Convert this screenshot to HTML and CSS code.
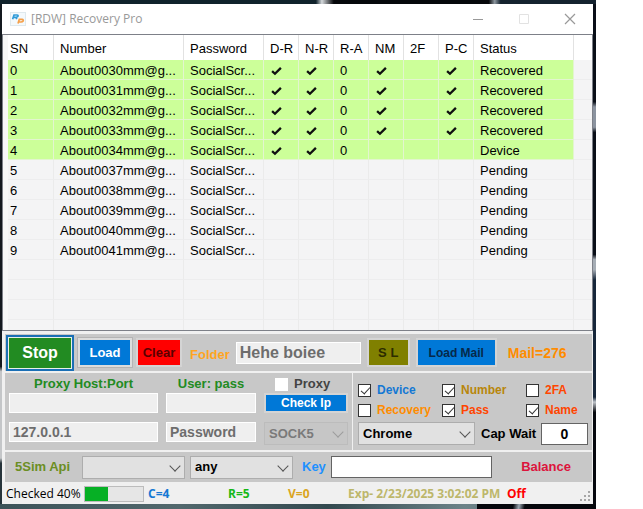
FILE: index.html
```html
<!DOCTYPE html>
<html lang="en">
<head>
<meta charset="utf-8">
<title>[RDW] Recovery Pro</title>
<link rel="stylesheet" href="styles.css">
</head>
<body>
<svg class="defs" aria-hidden="true">
  <symbol id="tick" viewBox="0 0 10 9"><path d="M1 4.6 L3.6 7 L9 1.6" fill="none" stroke="#111" stroke-width="2.1"/></symbol>
</svg>
<div class="desktop">
<main class="window">
  <header class="titlebar">
    <svg class="logo" viewBox="0 0 16 14">
      <rect x=".5" y=".5" width="15" height="13" fill="#f4f9fc" stroke="#dfe9ee"/>
      <path d="M2.6 7.2 L4 3 H7 Q8.6 3.2 7.8 4.6 Q7.2 5.4 6 5.4 L6.8 7.2 M3.4 5.4 H6" fill="none" stroke="#2f9bd8" stroke-width="1.7"/>
      <path d="M8 11.6 L9.3 7.4 H12 Q13.8 7.6 13.1 9 Q12.5 10 11 10 H8.8" fill="none" stroke="#f5a04a" stroke-width="1.7"/>
    </svg>
    <h1>[RDW] Recovery Pro</h1>
    <div class="controls">
      <button aria-label="Minimize"><svg viewBox="0 0 12 12"><path d="M1 6.5H11" stroke="#999"/></svg></button>
      <button aria-label="Maximize"><svg viewBox="0 0 12 12"><path d="M1.5 1.5H10.5V10.5H1.5Z" fill="none" stroke="#e2e2e2"/></svg></button>
      <button aria-label="Close"><svg viewBox="0 0 12 12"><path d="M1 1L11 11M11 1L1 11" stroke="#999" stroke-width="1.2"/></svg></button>
    </div>
  </header>

  <section class="list">
    <table>
      <colgroup><col class="c-sn"><col class="c-num"><col class="c-pw"><col class="c-a"><col class="c-a"><col class="c-a"><col class="c-a"><col class="c-a"><col class="c-a"><col class="c-status"><col></colgroup>
      <thead><tr><th>SN</th><th>Number</th><th>Password</th><th>D-R</th><th>N-R</th><th>R-A</th><th>NM</th><th>2F</th><th>P-C</th><th>Status</th><th></th></tr></thead>
      <tbody>
        <tr class="ok"><td>0</td><td>About0030mm@g...</td><td>SocialScr...</td><td><svg><use href="#tick"/></svg></td><td><svg><use href="#tick"/></svg></td><td>0</td><td><svg><use href="#tick"/></svg></td><td></td><td><svg><use href="#tick"/></svg></td><td>Recovered</td><td></td></tr>
        <tr class="ok"><td>1</td><td>About0031mm@g...</td><td>SocialScr...</td><td><svg><use href="#tick"/></svg></td><td><svg><use href="#tick"/></svg></td><td>0</td><td><svg><use href="#tick"/></svg></td><td></td><td><svg><use href="#tick"/></svg></td><td>Recovered</td><td></td></tr>
        <tr class="ok"><td>2</td><td>About0032mm@g...</td><td>SocialScr...</td><td><svg><use href="#tick"/></svg></td><td><svg><use href="#tick"/></svg></td><td>0</td><td><svg><use href="#tick"/></svg></td><td></td><td><svg><use href="#tick"/></svg></td><td>Recovered</td><td></td></tr>
        <tr class="ok"><td>3</td><td>About0033mm@g...</td><td>SocialScr...</td><td><svg><use href="#tick"/></svg></td><td><svg><use href="#tick"/></svg></td><td>0</td><td><svg><use href="#tick"/></svg></td><td></td><td><svg><use href="#tick"/></svg></td><td>Recovered</td><td></td></tr>
        <tr class="ok"><td>4</td><td>About0034mm@g...</td><td>SocialScr...</td><td><svg><use href="#tick"/></svg></td><td><svg><use href="#tick"/></svg></td><td>0</td><td></td><td></td><td></td><td>Device</td><td></td></tr>
        <tr><td>5</td><td>About0037mm@g...</td><td>SocialScr...</td><td></td><td></td><td></td><td></td><td></td><td></td><td>Pending</td><td></td></tr>
        <tr><td>6</td><td>About0038mm@g...</td><td>SocialScr...</td><td></td><td></td><td></td><td></td><td></td><td></td><td>Pending</td><td></td></tr>
        <tr><td>7</td><td>About0039mm@g...</td><td>SocialScr...</td><td></td><td></td><td></td><td></td><td></td><td></td><td>Pending</td><td></td></tr>
        <tr><td>8</td><td>About0040mm@g...</td><td>SocialScr...</td><td></td><td></td><td></td><td></td><td></td><td></td><td>Pending</td><td></td></tr>
        <tr><td>9</td><td>About0041mm@g...</td><td>SocialScr...</td><td></td><td></td><td></td><td></td><td></td><td></td><td>Pending</td><td></td></tr>
        <tr><td></td><td></td><td></td><td></td><td></td><td></td><td></td><td></td><td></td><td></td><td></td></tr>
        <tr><td></td><td></td><td></td><td></td><td></td><td></td><td></td><td></td><td></td><td></td><td></td></tr>
        <tr><td></td><td></td><td></td><td></td><td></td><td></td><td></td><td></td><td></td><td></td><td></td></tr>
        <tr class="last"><td></td><td></td><td></td><td></td><td></td><td></td><td></td><td></td><td></td><td></td><td></td></tr>
      </tbody>
    </table>
  </section>

  <div class="panels">
    <section class="panel actions">
      <button class="btn stop">Stop</button>
      <button class="btn load">Load</button>
      <button class="btn clear">Clear</button>
      <label class="orange" for="folder">Folder</label>
      <input class="field soft folder" id="folder" value="Hehe boiee">
      <button class="btn sl">S L</button>
      <button class="btn mail">Load Mail</button>
      <span class="count">Mail=276</span>
    </section>

    <div class="settings">
      <section class="panel proxy">
        <label class="green" for="host">Proxy Host:Port</label>
        <label class="green" for="user">User: pass</label>
        <label class="check dim"><input type="checkbox">Proxy</label>
        <input class="field soft" id="host">
        <input class="field soft" id="user">
        <button class="btn checkip">Check Ip</button>
        <input class="field soft" aria-label="Host" value="127.0.0.1">
        <input class="field soft" aria-label="Password" value="Password">
        <div class="drop off"><select aria-label="Proxy type" disabled><option>SOCK5</option></select></div>
      </section>
      <section class="panel options">
        <div class="checks">
          <label class="check blue"><input type="checkbox" checked>Device</label>
          <label class="check gold"><input type="checkbox" checked>Number</label>
          <label class="check red"><input type="checkbox">2FA</label>
          <label class="check amber"><input type="checkbox">Recovery</label>
          <label class="check red"><input type="checkbox" checked>Pass</label>
          <label class="check red"><input type="checkbox" checked>Name</label>
        </div>
        <div class="browser">
          <div class="drop"><select aria-label="Browser"><option>Chrome</option></select></div>
          <label for="wait">Cap Wait</label>
          <input class="field hard wait" id="wait" value="0">
        </div>
      </section>
    </div>

    <section class="panel api">
      <label class="olive" for="country">5Sim Api</label>
      <div class="drop"><select id="country"><option></option></select></div>
      <div class="drop"><select aria-label="Operator"><option>any</option></select></div>
      <label class="sky" for="key">Key</label>
      <input class="field hard key" id="key">
      <span class="balance">Balance</span>
    </section>
  </div>

  <footer class="status">
    <span class="done">Checked 40%</span>
    <div class="bar"><div class="fill" style="width:40%"></div></div>
    <b class="s-c">C=4</b>
    <b class="s-r">R=5</b>
    <b class="s-v">V=0</b>
    <b class="s-e">Exp- 2/23/2025 3:02:02 PM</b>
    <b class="s-o">Off</b>
    <svg class="grip" viewBox="0 0 12 12"><path d="M8 0h2v2h-2zM4 4h2v2h-2zM8 4h2v2h-2zM0 8h2v2h-2zM4 8h2v2h-2zM8 8h2v2h-2z" fill="#a6a6a6"/></svg>
  </footer>
</main>
</div>
</body>
</html>
```
FILE: styles.css
```css
* { box-sizing: border-box; }

body {
  margin: 0;
  padding-right: 47px;
  background: #fff;
  font: 13px/16px "Liberation Sans", sans-serif;
  color: #000;
}

.defs { position: absolute; width: 0; height: 0; }

.desktop {
  padding: 4px 3px 5px 2px;
  background:
    linear-gradient(100deg, transparent 80%, #05070c 80%, #05070c 86%, #9aa6b0 87%, #05070c 88%) bottom / 100% 5px no-repeat,
    linear-gradient(90deg, #3c5359, #52686d 30%, #33494f 55%, #6d8388 78%, #4c6066) bottom / 100% 5px no-repeat,
    linear-gradient(90deg, #10222b 0 53%, #d5d9dc 54%, #05070a 56% 82%, #8d979f 83%, #14222e 84%) top / 100% 4px no-repeat,
    linear-gradient(#0a0f18 0 20%, #8b939f 21% 25%, #0a0f18 26% 50%, #a6adb5 51% 53%, #16263a 55% 78%, #c0c5cb 79%, #06080e 81%) right / 3px 100% no-repeat,
    linear-gradient(#14191f 0 72%, #c4c6c8 73% 90%, #26343b 91%);
}

.window { background: #f0f0f0; }

/* Title bar */
.titlebar {
  display: flex;
  align-items: center;
  height: 30px;
  padding-left: 8px;
  background: #fff;
}
.logo { width: 16px; height: 14px; }
h1 {
  flex: 1;
  margin: 0 0 0 5px;
  font: 12px/16px "Open Sans", sans-serif;
  color: #999;
}
.controls { display: flex; }
.controls button {
  width: 46px;
  height: 28px;
  padding: 0;
  border: 0;
  background: none;
}
.controls svg { display: block; width: 12px; height: 12px; margin: 0 auto; }

/* Account list */
.list {
  padding-left: 5px;
  border: 1px solid #7d8088;
  background: #f8f8f8;
}
table {
  width: 100%;
  table-layout: fixed;
  border-collapse: separate;
  border-spacing: 0;
}
.c-sn { width: 46px; }
.c-num { width: 130px; }
.c-pw { width: 80px; }
.c-a { width: 35px; }
.c-status { width: 100px; }
th, td {
  padding: 0 0 0 6px;
  border-right: 1px solid #ebebeb;
  text-align: left;
  font-weight: 400;
  white-space: nowrap;
}
th:first-child, td:first-child { padding-left: 2px; }
th:last-child, td:last-child { border-right: 0; }
th { height: 25px; padding-top: 2px; background: #fff; border-color: #e2e2e2; }
td { height: 20px; padding-top: 2px; background: #f4f4f5; border-bottom: 1px solid #ededee; }
.ok td { background: #ccff99; border-color: #e3f5cf; }
.ok td:last-child { background: #f4f4f5; border-color: #ededee; }
.last td { height: 10px; border-bottom: 0; }
td svg { display: block; width: 11px; height: 10px; margin-left: 1px; }

/* Panels */
.panels {
  display: flex;
  flex-direction: column;
  gap: 2px;
  padding: 3px 1px 1px 3px;
  font-weight: 700;
}
.panel { background: #c8c8c8; }

.btn {
  padding: 0;
  border: 2px solid #d4d4d4;
  font: 700 13px/16px "Liberation Sans", sans-serif;
}
.field {
  min-width: 0;
  padding: 0 3px;
  font: 700 14px/16px "Liberation Sans", sans-serif;
  border-radius: 0;
}
.soft { height: 22px; border: 1px solid #fff; background: #efefef; color: #6d6d6d; }
.hard { height: 22px; border: 1px solid #646464; background: #fff; color: #000; }

.drop { position: relative; height: 23px; }
.drop select {
  width: 100%;
  height: 100%;
  padding: 0 4px;
  border: 1px solid #adadad;
  border-radius: 0;
  background: #e1e1e1;
  color: #000;
  font: 700 13px/16px "Liberation Sans", sans-serif;
  appearance: none;
}
.drop::after {
  content: "";
  position: absolute;
  right: 6px;
  top: 6px;
  width: 7px;
  height: 7px;
  border: solid #555;
  border-width: 0 1px 1px 0;
  transform: rotate(45deg);
  pointer-events: none;
}
.off select { background: #c6c6c6; border-color: #bcbcbc; color: #7a7a7a; opacity: 1; }
.off::after { border-color: #9c9c9c; }

.check { display: flex; align-items: center; gap: 6px; font-size: 12px; }
.check input {
  position: relative;
  width: 13px;
  height: 13px;
  margin: 0;
  border: 1px solid #333;
  background: #fff;
  appearance: none;
}
.check input:checked::after {
  content: "";
  position: absolute;
  left: 4px;
  top: 0;
  width: 4px;
  height: 8px;
  border: solid #333;
  border-width: 0 1px 1px 0;
  transform: rotate(42deg);
}

.orange { color: #ffa51e; }
.green { color: #228b22; }
.blue { color: #1478d4; }
.gold { color: #b8860b; }
.red { color: #ff4500; }
.amber { color: #ff8c00; }
.olive { color: #6b8e23; }
.sky { color: #1e90ff; }

.actions { display: flex; align-items: center; height: 37px; padding-left: 1px; }
.stop {
  width: 68px;
  height: 36px;
  border-color: #1a6fb5;
  outline: 1px solid #e8f0e8;
  outline-offset: -3px;
  background: #228b22;
  color: #fff;
  font-size: 16px;
}
.load { width: 54px; height: 29px; margin-left: 4px; border-color: #dcdcdc; outline: 1px solid #b4b4b4; background: #0078d7; color: #fff; }
.clear { width: 46px; height: 29px; margin-left: 4px; background: #f00; color: #5a0000; }
.actions .orange { margin: 4px 6px 0 8px; }
.folder { width: 125px; font-size: 16px; }
.sl { width: 43px; height: 29px; margin-left: 6px; background: #808000; color: #2c2c00; }
.mail { width: 81px; height: 29px; margin-left: 6px; background: #0078d7; color: #06294a; font-size: 12px; }
.count { margin-left: 11px; color: #ff8c00; font-size: 14px; }

.settings { display: grid; grid-template-columns: 347px 1fr; gap: 1px; }
.proxy {
  display: grid;
  grid-template-columns: 149px 90px 84px;
  grid-template-rows: 16px 20px auto;
  gap: 1px 8px;
  align-items: start;
  padding: 3px 5px 5px 4px;
}
.proxy .soft { height: 20px; }
.proxy .green { text-align: center; }
.proxy > :nth-child(n+7) { margin-top: 8px; }
.dim { gap: 6px; padding-left: 11px; color: #444; font-size: 13px; }
.dim input { border-color: #fff; }
.checkip { height: 20px; background: #0078d7; color: #fff; font-size: 12px; line-height: 14px; }

.options { padding: 7px 4px 5px 5px; }
.checks { display: grid; grid-template-columns: 84px 84px 1fr; grid-auto-rows: 20px; }
.browser { display: flex; align-items: center; margin-top: 2px; }
.browser .drop { width: 117px; }
.browser label { flex: 1; padding-left: 6px; }
.wait { width: 47px; text-align: center; }

.api { display: flex; align-items: center; height: 30px; padding: 0 21px 0 10px; }
.api .drop { width: 103px; margin-right: 5px; }
.api .olive { width: 67px; }
.api .sky { width: 29px; margin-left: 4px; }
.key { flex: 1; max-width: 161px; }
.balance { margin-left: auto; color: #dc143c; }

/* Status bar */
.status {
  display: flex;
  align-items: center;
  height: 21px;
  padding-left: 4px;
  font: 12px/16px "Open Sans", sans-serif;
  white-space: nowrap;
}
.done { width: 78px; }
.bar { width: 60px; height: 16px; margin-right: 4px; border: 1px solid #bcbcbc; background: #e6e6e6; }
.fill { height: 100%; background: #06b025; }
.s-c { width: 80px; color: #1478d4; }
.s-r { width: 60px; color: #16b816; }
.s-v { width: 60px; color: #daa520; }
.s-e { width: 159px; color: #bdb76b; }
.s-o { color: #f00; }
.grip { width: 12px; height: 12px; margin: 6px 1px 0 auto; }
```
